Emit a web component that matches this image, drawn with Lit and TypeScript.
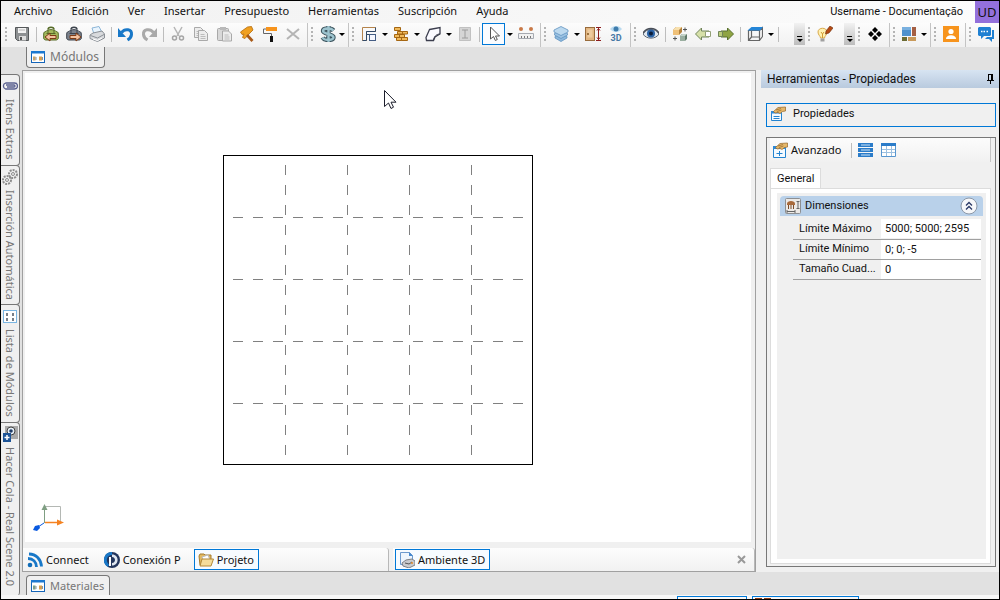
import { LitElement, html, css, svg, TemplateResult } from "lit";
import { customElement } from "lit/decorators.js";

const icon = (body: TemplateResult, size = 16) =>
  html`<svg width=${size} height=${size} viewBox="0 0 16 16" aria-hidden="true">${body}</svg>`;

const modules = (c = "#c9a46a") => svg`
  <rect x="1.500" y="2.500" width="13" height="11" fill="#fff" stroke="#1565b8"/>
  <rect x="1" y="2" width="14" height="2.500" fill="#1c78d0"/>
  <rect x="3" y="7.500" width="2.500" height="4" fill=${c}/><rect x="9" y="7.500" width="3" height="4" fill="#d8a050"/>
  <path d="M6 8v3M12.500 8v3" stroke="#8b96a2"/>`;

const backpack = (fill: string, dark: string, arrow: string) => svg`
  <path d="M5 3.500C5 .500 11 .500 11 3.500" fill="none" stroke=${dark} stroke-width="1.500"/>
  <path d="M.700 8c0-2 1.300-2.500 2.300-2.500 1-2.500 9-2.500 10 0 1 0 2.300.500 2.300 2.500v4c0 1.500-1.500 2-2.300 2H3c-1 0-2.300-.500-2.300-2z" fill=${fill} stroke=${dark}/>
  <path d="M3.500 7.500h9M5 4v4M11 4v4" stroke=${dark}/>${arrow === "left"
    ? svg`<path d="M2 11l5-4v2.500h6v3H7V15z" fill="#f3c3a0" stroke="#7d3a14"/>`
    : svg`<path d="M15 11l-5-4v2.500H4v3h6V15z" fill="#f3c3a0" stroke="#7d3a14"/>`}`;

const sheet = (x: number, y: number) => svg`
  <path d="M${x} ${y}h6l3 3v7h-9z" fill="#ececec" stroke="#a9a9a9"/>
  <path d="M${x + 2} ${y + 4}h4M${x + 2} ${y + 6}h5M${x + 2} ${y + 8}h5" stroke="#bcbcbc"/>`;

const cube = (x: number, y: number, a: string, b: string, c: string) => svg`
  <path d="M${x} ${y + 2}l2-2h5v5l-2 2h-5z" fill=${c}/>
  <path d="M${x} ${y + 2}h5v5h-5z" fill=${a}/><path d="M${x} ${y + 2}l2-2h5l-2 2z" fill=${b}/>`;

const hand = svg`
  <path d="M3.500 5.500L8 1.500 15.500 1v4l-3 .500-2.500 2-2-1-3 .500z" fill="#e6b869" stroke="#94662a" stroke-width=".7"/>
  <path d="M6 4l5-1.500M7 5.500l4.500-1.500" stroke="#94662a" stroke-width=".7"/>`;

const I: Record<string, TemplateResult> = {
  save: svg`<path d="M1.500 1.500h13v13h-11l-2-2z" fill="#8d9092" stroke="#55585a"/><path d="M4 2h8v5H4z" fill="#f3f3f3"/><path d="M5 10h7v4.500H5z" fill="#ddd"/><path d="M6 11h2v3H6z" fill="#555"/><path d="M5 4h6" stroke="#b5b5b5"/>`,
  open: backpack("#a3b95c", "#566b28", "left"),
  pack: backpack("#7b828d", "#3c434d", "right"),
  print: svg`<path d="M5 8L3 2l7-1.500 3 6z" fill="#e9f4fd" stroke="#8cb6d8"/><path d="M1 9l3-2 9-2 2.500 3v4l-7 3.500L1 12.500z" fill="#d8dadd" stroke="#8b9096"/><path d="M1.500 9.500l7 2.500 6.500-3.500" fill="none" stroke="#8b9096"/><path d="M4 13l4.500 1.500L13 12" fill="none" stroke="#fff"/>`,
  undo: svg`<path d="M3.500 6.500C7 2 14 3 13.500 8.500c-.2 2.500-1.500 4-4 5.500" fill="none" stroke="#1878c8" stroke-width="3"/><path d="M0 2v9h8z" fill="#1878c8"/>`,
  redo: svg`<path d="M12.500 6.500C9 2 2 3 2.500 8.500c.2 2.500 1.500 4 4 5.500" fill="none" stroke="#a9a9a9" stroke-width="3"/><path d="M16 2v9H8z" fill="#a9a9a9"/>`,
  cut: svg`<path d="M4 1l5 9M12 1l-5 9" stroke="#b5b5b5" stroke-width="1.500"/><circle cx="4.500" cy="12" r="2" fill="none" stroke="#a5a5a5" stroke-width="1.500"/><circle cx="11.500" cy="12" r="2" fill="none" stroke="#a5a5a5" stroke-width="1.500"/>`,
  copy: svg`${sheet(1.5, 1.5)}${sheet(5.5, 4.5)}`,
  paste: svg`<rect x="1.500" y="2.500" width="11" height="12" rx="1" fill="#d8d8d8" stroke="#a9a9a9"/><path d="M4 1h6v3H4z" fill="#b9b9b9"/>${sheet(6.5, 5)}`,
  hammer: svg`<path d="M1.500 6l7-5 4-.500 1.500 3.500-3 3-5 5.500-2.500-1 1.500-3.500-2 .500z" fill="#f0a020" stroke="#b46a0a" stroke-width=".8"/><path d="M9 8l5.500 6-2 2L7 10z" fill="#a85a18"/>`,
  roller: svg`<path d="M4 1h11v4H4z" fill="#f7941d"/><path d="M4 3H1.500v4.500h8v3" fill="none" stroke="#666"/><path d="M8 10h3v6H8z" fill="#111"/>`,
  del: svg`<path d="M2 3l12 10M14 3L2 13" stroke="#b4b4b4" stroke-width="2"/>`,
  money: svg`<path d="M13.500 4.500C11 1.500 3 2 3 5s10.500 3 10.500 6.300S4.500 15 2.500 11.500M8.500 0v16" fill="none" stroke="#3c545e" stroke-width="4.400"/><path d="M13.500 4.500C11 1.500 3 2 3 5s10.500 3 10.500 6.300S4.500 15 2.500 11.500M8.500 0v16" fill="none" stroke="#9dc4cf" stroke-width="2.400"/>`,
  walls: svg`<path d="M1.500 14.500v-13h13v4h-9v9z" fill="none" stroke="#b5844c"/><path d="M1.500 14.500h4v-6h3M14.500 1.500v4h-9v3" fill="none" stroke="#334a68"/><rect x="8.500" y="8.500" width="6" height="6" fill="#f6f8ff" stroke="#445d84"/>`,
  bricks: svg`<g fill="#f0b95a" stroke="#a56612"><path d="M1.500 1.500h6v3h-6zM4.500 5.500h5v2.500h-5zM9.500 5.500h5v2.500h-5zM1.500 8.500h5v3h-5zM6.500 8.500h5v3h-5zM3.500 11.500h5v3h-5zM8.500 11.500h6v3h-6z"/></g>`,
  shape: svg`<path d="M4.500 3.500l10.500-2v6.500l-5 3-1.500 3.500H1.500l-.500-3z" fill="#fafaff" stroke="#3b3d4d" stroke-width="1.300"/><path d="M15 8c-4 0-6 3-6.500 6" fill="none" stroke="#3b3d4d"/>`,
  dim: svg`<path d="M2.500 1.500h11v13h-11z" fill="#d5d5d5" stroke="#c1c1c1"/><path d="M5 4h6M5 12h6M8 4v8" stroke="#9c9c9c"/>`,
  arrow: svg`<path d="M4.500 1v12l3-2.500 1.800 4 2-1-1.800-3.500h4z" fill="#fff" stroke="#555"/>`,
  ruler: svg`<circle cx="3" cy="3" r="2" fill="#c97a48"/><circle cx="13" cy="3" r="2" fill="#c97a48"/><path d="M.500 7.500h15v5H.500z" fill="#f1f1f1" stroke="#a6aab1"/><path d="M3.500 10v2M6.500 10v2M9.500 10v2M12.500 10v2" stroke="#777"/>`,
  layers: svg`<g stroke="#5f93c0" stroke-width=".8"><path d="M2 10.500l6-3 6 3v1.500l-6 3.500L2 12z" fill="#8db8dd"/><path d="M1.500 7.500l6.500-3 6.500 3V9L8 12.500 1.500 9z" fill="#9dc3e3"/><path d="M1 4l7-3.500L15 4v2L8 9.500 1 6z" fill="#bcd9ef"/></g>`,
  door: svg`<rect x=".500" y="1.500" width="9" height="13" fill="#e2b682" stroke="#986b3c"/><rect x="2.500" y="3.500" width="5" height="8" fill="#eecb9e"/><circle cx="3" cy="8" r="1" fill="#845722"/><path d="M11 1.500h5M11 14.500h5M13.500 2v12M12 4.500l1.500-2 1.500 2M12 11.500l1.500 2 1.500-2" fill="none" stroke="#8e1e1e"/>`,
  eye: svg`<path d="M0 8c3-6 13-6 16 0-3 5.500-13 5.500-16 0z" fill="#dfe6ee" stroke="#5b6673"/><circle cx="8" cy="7.500" r="4" fill="#2a62a5"/><circle cx="8" cy="7.500" r="2" fill="#0b1c38"/><path d="M0 7C4 1 12 1 16 7" fill="none" stroke="#4a4f58" stroke-width="1.500"/>`,
  cubes: svg`<path d="M1 4l3-3h6v5l-3 3H1z" fill="#b3803a"/><path d="M1 4h6v5H1z" fill="#efc078"/><path d="M1 4l3-3h6L7 4z" fill="#f8e0ae"/>${cube(8, 8, "#9aafa0", "#c4d3c9", "#5f7868")}<path d="M11 3.500h4M13 1.500v4M3 10.500v4M1 12.500h4" stroke="#555"/>`,
  back: svg`<path d="M.500 8l6-6v3H14v6H6.500v3z" fill="#d6e0a8" stroke="#71855a"/><path d="M10.500 5.500h5v5h-5z" fill="#fff" stroke="#93a077"/>`,
  fwd: svg`<path d="M15.500 8l-6-6v3H3v6h6.500v3z" fill="#8fa443" stroke="#58702c"/><path d="M.500 5.500h4v5h-4z" fill="#bccd7c" stroke="#71855a"/>`,
  box3d: svg`<path d="M1.500 14.500v-10h11v10zM12.500 4.500l3-3v9l-3 4M4.500 4v7h8M1.500 14.500l3-3.500" fill="none" stroke="#666" stroke-width="1.200"/><path d="M.500 4.500L4.500 1H16l-3 3.500z" fill="#2586d8"/>`,
  bulb: svg`<path d="M3.500 12c0-2-2.500-3-2.500-6C1 1 10 1 10 6c0 3-2.500 4-2.500 6z" fill="#fff1b2" stroke="#d9a94a"/><path d="M4 6l1.500 2L7 6M5.500 8v4" fill="none" stroke="#d29b31"/><path d="M3.500 12.500h4v3h-4z" fill="#a0a0a0"/><path d="M9 5l4-5 3 2-4 5-3.500 1z" fill="#b54a12" stroke="#6a2a08" stroke-width=".6"/>`,
  diamonds: svg`<path d="M8 1l3 3-3 3-3-3zM8 9l3 3-3 3-3-3zM4 5l3 3-3 3-3-3zM12 5l3 3-3 3-3-3z" fill="#000"/>`,
  mosaic: svg`<path d="M0 1h9v9H0z" fill="#4f91cd"/><path d="M0 1h9v3H0z" fill="#79b0df"/><path d="M10 1h4v9h-4z" fill="#a45f43"/><path d="M0 11h5v4H0z" fill="#6b6b34"/><path d="M6 11h8v4H6z" fill="#c99a5a"/>`,
  person: svg`<rect width="16" height="16" fill="#f7941d"/><circle cx="8" cy="5.500" r="2.600" fill="#fff"/><path d="M3 13c0-5 10-5 10 0z" fill="#fff"/>`,
  chat: svg`<path d="M1 1h11l1 1v7l-1 1H6l-3 3v-3H1L0 9V2z" fill="#1f80d2"/><path d="M14 4h2v9h-2v3l-3-3H7l2-2h5z" fill="#1f80d2"/><path d="M3 5.500h1.500M5.500 5.500H7M8.500 5.500H10" stroke="#fff" stroke-width="1.500"/>`,
  clip: svg`<path d="M3.500 5h9a3 3 0 010 6h-9a3.200 3.200 0 010-6M4 7h8a1 1 0 010 2H5" fill="none" stroke="#5b6190" stroke-width="1.300"/>`,
  gears: svg`<g fill="none" stroke="#8d8d8d"><circle cx="11" cy="5" r="4" stroke-dasharray="2 1" stroke-width="2"/><circle cx="11" cy="5" r="1.500"/><circle cx="5" cy="11" r="4" stroke-dasharray="2 1" stroke-width="2"/><circle cx="5" cy="11" r="1.500"/></g>`,
  list: svg`<rect x="1.500" y="2.500" width="13" height="12" fill="#fff" stroke="#79b5e2"/><path d="M4 5h2v3H4zM10 5h2v3h-2zM4 10h2v3H4zM10 10h2v3h-2z" fill="#777e88"/>`,
  queue: svg`<path d="M3 0h13v13H3z" fill="#aaa"/><circle cx="9" cy="5" r="4" fill="#e8f0f7" stroke="#444"/><circle cx="9" cy="5" r="1.800" fill="#1d3a66"/><path d="M1 7h8v9H1z" fill="#1e5496"/><path d="M2.500 11.500h5M5 9v5" stroke="#fff" stroke-width="1.500"/>`,
  rss: svg`<circle cx="3" cy="13" r="2.300" fill="#0f6cb8"/><path d="M1 6.500c5 0 8.500 3.500 8.500 8.500M2 2c7 0 12 5 12.500 12.500" fill="none" stroke="#1878c8" stroke-width="2.800"/>`,
  promob: svg`<circle cx="8" cy="8" r="8" fill="#23355c"/><path d="M8 0a8 8 0 00-4 15l1-2.500C1 9 3 3 8 3z" fill="#1878c8"/><path d="M8 2.500c7.500 0 7.500 11 0 11v-2.500c4 0 4-6 0-6z" fill="#dfe6f0"/><path d="M6 14V5" stroke="#fff" stroke-width="2"/>`,
  folder: svg`<path d="M1 4l1-2h4l1 1h6v10H2z" fill="#e1b963" stroke="#a87d2c"/><path d="M4 5l6-2 2 5H5z" fill="#fff" stroke="#bbb"/><path d="M4 7h11.500l-2.500 7H2z" fill="#f5dc9a" stroke="#b48a3a"/>`,
  ambient: svg`<path d="M1.500.500h9l3 3v9h-12z" fill="#eef5fd" stroke="#6d9ace"/><path d="M10 0l4 4h-4z" fill="#4688ce"/><path d="M3 11l4-3 6-1 3 2v4l-6 3-6-2z" fill="#c9cacd" stroke="#7c8086"/><path d="M6 11l4 1 3-2" fill="none" stroke="#555"/><circle cx="13" cy="11" r="1" fill="#e28a2a"/>`,
  card: svg`<path d="M1.500 6.500h10v8h-10z" fill="#f4faff" stroke="#2484d0"/><path d="M1 5h11v2.500H1z" fill="#2e8ad8"/><path d="M3.500 10.500h6M3.500 12.500h6" stroke="#2484d0"/>${hand}`,
  advanced: svg`<path d="M1.500 4.500h12v11h-12z" fill="#f4faff" stroke="#2484d0"/><path d="M1 4h13v3H1z" fill="#2e8ad8"/><path d="M4.500 11.500h6M7.500 9v5" stroke="#2484d0"/>${hand}`,
  rows: svg`<path d="M0 1h15v4H0zM0 6h15v4H0zM0 11h15v4H0z" fill="#2b7cc9"/><path d="M3 3h9M3 8h9M3 13h9" stroke="#cfe5f8"/>`,
  table: svg`<path d="M.500 1.500h14v13H.500z" fill="#fff" stroke="#5896cf"/><path d="M0 1h15v3H0z" fill="#2b7cc9"/><path d="M5.500 4v10M10.500 4v10M1 7.500h13M1 10.500h13" stroke="#9cc0e0"/>`,
  size: svg`<rect x=".500" y=".500" width="15" height="15" rx="1" fill="#ece9e6" stroke="#8d8f92"/><path d="M2 5.500C2 2 10 2 10 5.500V7H2z" fill="#a8693a"/><path d="M3.500 7v4M8.500 7v4M6 7v4" stroke="#7c4c28"/><path d="M11.500 3.500h3M11.500 10.500h3M13 4v6M2 13.500h8M2 12v3M10 12v3" stroke="#666"/>`,
};

@customElement("app-root")
export class AppRoot extends LitElement {
  static styles = css`
    :host { display: block; font: 11px/16px "Noto Sans", "Open Sans", sans-serif; color: #111; }
    * { box-sizing: border-box; }
    button, input { font: inherit; color: inherit; border: 0; padding: 0; margin: 0; background: none; }
    svg { display: block; flex: none; }
    .window { height: 100vh; border: 1px solid #000; background: #e1e1e1; display: flex; flex-direction: column; overflow: hidden; }
    .top { display: flex; height: 22px; flex: none; background: linear-gradient(90deg, #f1f1f1, #fcfcfc); }
    .menu { display: flex; gap: 19px; padding: 0 0 3px 13px; flex: 1; align-items: center; }
    .menu button, .label { white-space: nowrap; }
    .ui { font-family: Roboto, sans-serif; }
    .user { align-self: center; padding-right: 12px; white-space: nowrap; }
    .avatar { width: 24px; background: #9370db; text-align: center; font-size: 13px; line-height: 20px; }
    .tools { display: flex; flex: none; height: 24px; background: #f4f4f4; }
    .strip { display: flex; align-items: center; padding: 0 3px 2px 0; border-right: 1px solid #c4c4c4; background: linear-gradient(#fcfcfc, #f1f1f1); }
    .strip:first-child { padding-left: 1px; }
    .strip.over { padding-right: 0; border-right: 0; }
    .strip:last-child { flex: 1; border: 0; }
    .grip { width: 8px; height: 15px; flex: none; background: linear-gradient(#b4b4b4, #b4b4b4) 3px 0 / 2px 2px no-repeat, linear-gradient(#b4b4b4, #b4b4b4) 3px 4px / 2px 2px no-repeat, linear-gradient(#b4b4b4, #b4b4b4) 3px 8px / 2px 2px no-repeat, linear-gradient(#b4b4b4, #b4b4b4) 3px 12px / 2px 2px no-repeat; }
    .tool { width: 23px; height: 22px; display: flex; align-items: center; justify-content: center; flex: none; }
    .tool.on { border: 1px solid #0078d7; background: #fafcff; }
    .sep { width: 6px; height: 15px; flex: none; background: linear-gradient(#bdbdbd, #bdbdbd) 3px 0 / 1px 100% no-repeat; }
    .drop { width: 9px; height: 22px; display: flex; align-items: center; justify-content: center; flex: none; }
    .tight { width: 6px; }
    .drop::after { content: ""; border: 3px solid transparent; border-top-color: #000; border-bottom: 0; }
    .more { width: 11px; height: 22px; margin-left: 8px; background: linear-gradient(#f2f2f2, #bcbcbc); display: flex; flex-direction: column; align-items: center; justify-content: flex-end; gap: 2px; padding-bottom: 3px; flex: none; }
    .more.far { margin-left: 13px; }
    .more::before { content: ""; width: 5px; height: 1px; background: #000; }
    .more::after { content: ""; border: 3px solid transparent; border-top-color: #000; border-bottom: 0; }
    .work { flex: 1; min-height: 0; display: grid; grid-template-columns: 21px minmax(0, 1fr) 243px; grid-template-rows: 23px minmax(0, 1fr) 23px; }
    .band { grid-column: 2 / 4; display: flex; padding-left: 4px; }
    .tab { display: flex; align-items: center; gap: 4px; padding: 0 5px 0 3px; border: 1px solid #777; background: #f0f0f0; color: #767676; white-space: nowrap; }
    .band .tab { height: 21px; border-top: 0; border-radius: 0 0 4px 4px; font-size: 12px; }
    .foot .tab { margin-top: 3px; height: 20px; border-top: 1px solid #777; border-bottom: 0; border-radius: 4px 4px 0 0; font-size: 11px; }
    .side { grid-column: 1; grid-row: 2 / 4; padding-top: 4px; display: flex; flex-direction: column; width: 19px; }
    .side .tab { writing-mode: vertical-rl; border-left: 0; border-radius: 0 4px 4px 0; padding: 3px 0 5px; width: 19px; margin-bottom: -1px; gap: 5px; line-height: 16px; }
    .side .tab:last-child { border-bottom: 0; flex: 1; justify-content: flex-start; }
    .view { grid-column: 2; grid-row: 2; border: 1px solid #a0a0a0; background: #f0f0f0; padding-top: 2px; display: flex; flex-direction: column; min-width: 0; }
    .scene { flex: 1; min-height: 0; margin: 0 4px 6px 2px; background: #fff; overflow: hidden; }
    .scene svg { width: 100%; height: 100%; }
    .docs { display: flex; height: 23px; flex: none; gap: 4px; }
    .docbar { flex: 1; display: flex; align-items: center; background: linear-gradient(#fdfdfd, #f1f1f1); border-right: 1px solid #b8b8b8; border-radius: 0 3px 0 0; }
    .docbar.start { flex: 0 0 50%; }
    .doc { height: 21px; display: flex; align-items: center; gap: 3px; padding: 0 4px 0 3px; border: 1px solid transparent; white-space: nowrap; margin-right: 6px; }
    .doc.on { border-color: #0078d7; background: #f7fbff; margin-left: 2px; }
    .close { margin-left: auto; margin-right: 8px; }
    .right { grid-column: 3; grid-row: 2; background: #f0f0f0; padding-left: 5px; display: flex; flex-direction: column; min-height: 0; }
    .title { height: 18px; flex: none; display: flex; align-items: center; justify-content: space-between; padding: 0 4px 0 6px; background: linear-gradient(#d7e4f2, #b9cade); font-size: 12px; }
    .prop { height: 24px; flex: none; margin: 15px 3px 0 5px; padding: 0 4px 2px 3px; display: flex; align-items: center; gap: 7px; border: 1px solid #0078d7; }
    .box { flex: 1; min-height: 0; margin: 10px 3px 5px 5px; border: 1px solid #777; padding: 0 4px 2px 3px; display: flex; flex-direction: column; }
    .boxbar { display: flex; height: 24px; flex: none; align-items: center; padding-left: 2px; background: linear-gradient(#fcfcfc, #f1f1f1); border-right: 1px solid #c4c4c4; }
    .boxbar .adv { display: flex; align-items: center; gap: 3px; margin-right: 7px; font-family: "Noto Sans", sans-serif; }
    .general { align-self: flex-start; margin: 6px 0 -1px; height: 21px; padding: 0 6px; background: #fff; border: 1px solid #dcdcdc; border-bottom: 0; }
    .page { flex: 1; border: 1px solid #dcdcdc; background: #fff; padding: 4px 4px 4px 6px; display: flex; }
    .inner { flex: 1; background: #f0f0f0; padding: 3px; }
    .head { width: 100%; height: 20px; display: flex; align-items: center; gap: 4px; padding: 0 5px; background: #b9d1ea; border-radius: 4px 4px 0 0; }
    .head .round { margin-left: auto; }
    .grid { margin: 3px 2px 0 13px; border-collapse: collapse; table-layout: fixed; width: calc(100% - 15px); }
    .grid th, .grid td { height: 20px; padding: 0; border-bottom: 1px solid #a0a0a0; font-weight: 400; text-align: left; }
    .grid th { width: 88px; padding-left: 6px; }
    .grid label { display: block; white-space: nowrap; }
    .grid input { display: block; width: 100%; height: 19px; background: #fff; padding-left: 4px; }
    .status { height: 4px; flex: none; background: #f7f7f7; display: flex; gap: 5px; justify-content: flex-end; padding: 1px 140px 0 0; overflow: hidden; }
    .peek { width: 70px; height: 20px; flex: none; border: 1px solid #0078d7; }
    .peek.wide { width: 107px; display: flex; gap: 2px; padding: 1px 2px; }
    .chip { width: 7px; height: 8px; background: #8c3a14; }
  `;

  tool(name: string, label: string, on = false) {
    return html`<button class="tool ${on ? "on" : ""}" aria-label=${label}>${icon(I[name])}</button>`;
  }
  drop(name: string, label: string, tight = false, on = false) {
    return html`${this.tool(name, label, on)}<button class="drop ${tight ? "tight" : ""}" aria-label="${label}: opciones"></button>`;
  }
  sep() { return html`<span class="sep"></span>`; }
  grip() { return html`<span class="grip"></span>`; }

  scene() {
    const at = [62, 124, 186, 248];
    return html`<svg role="img" aria-label="Ambiente 3D">
      <rect x="198.500" y="82.500" width="309" height="309" fill="#fff" stroke="#000"/>
      <g stroke="#808080" stroke-dasharray="10 10">
        ${at.map(d => svg`<path d="M208 ${d + 82.5}h290M${d + 198.5} 92v290"/>`)}
      </g>
      <path d="M359.500 17.500v16l4-3.500 2.500 5.500 2.500-1.300-2.500-5h5z" fill="#fff" stroke="#1b1d2b"/>
      <path d="M19 433.500h16.500v16" fill="none" stroke="#b4b8b4"/>
      <path d="M19.500 450v-14" stroke="#7f9e82"/><path d="M19.500 431l3 6h-6z" fill="#7f9e82"/>
      <path d="M20 449.500h14" stroke="#f58220" stroke-width="1.500"/><path d="M32 446.500l7 3-7 3z" fill="#f58220"/>
      <path d="M19 450l-6 4" stroke="#0a5ae0"/><path d="M8 457l2-4 4-1 1 3-3 3z" fill="#0a5ae0"/>
    </svg>`;
  }

  row(id: string, label: string, value: string) {
    return html`<tr><th scope="row"><label for=${id}>${label}</label></th><td><input id=${id} .value=${value}></td></tr>`;
  }

  render() {
    const menus = ["Archivo", "Edición", "Ver", "Insertar", "Presupuesto", "Herramientas", "Suscripción", "Ayuda"];
    return html`<div class="window">
      <header class="top">
        <nav class="menu">${menus.map(m => html`<button>${m}</button>`)}</nav>
        <span class="user ui">Username - Documentação</span>
        <button class="avatar">UD</button>
      </header>
      <div class="tools">
        <div class="strip">${this.grip()}${this.tool("save", "Guardar")}${this.sep()}
          ${this.tool("open", "Abrir")}${this.tool("pack", "Exportar")}${this.tool("print", "Imprimir")}${this.sep()}
          ${this.tool("undo", "Deshacer")}${this.tool("redo", "Rehacer")}${this.sep()}
          ${this.tool("cut", "Cortar")}${this.tool("copy", "Copiar")}${this.tool("paste", "Pegar")}${this.tool("hammer", "Construir")}${this.tool("roller", "Pintar")}${this.tool("del", "Eliminar")}</div>
        <div class="strip">${this.grip()}${this.drop("money", "Presupuesto", true)}</div>
        <div class="strip">${this.grip()}${this.drop("walls", "Paredes")}${this.drop("bricks", "Ladrillos")}${this.drop("shape", "Formas")}${this.tool("dim", "Cota")}${this.sep()}
          ${this.drop("arrow", "Seleccionar", false, true)}${this.tool("ruler", "Medir")}</div>
        <div class="strip">${this.grip()}${this.drop("layers", "Capas")}${this.tool("door", "Altura")}
          <button class="tool" aria-label="Vista 3D"><svg width="16" height="18" viewBox="0 0 16 18"><path d="M2 4c3-4 9-4 12 0-3 4-9 4-12 0z" fill="#b9daf0"/><circle cx="8" cy="4" r="2.500" fill="#3f7cac"/><text x="8" y="16" text-anchor="middle" font-family="Roboto" font-size="9" font-weight="700" fill="#4678a5">3D</text></svg></button></div>
        <div class="strip over">${this.grip()}${this.tool("eye", "Ver")}${this.sep()}
          ${this.tool("cubes", "Reemplazar")}${this.tool("back", "Anterior")}${this.tool("fwd", "Siguiente")}${this.sep()}
          ${this.drop("box3d", "Caja")}${this.sep()}<button class="more far" aria-label="Más"></button></div>
        <div class="strip over">${this.grip()}${this.tool("bulb", "Iluminación")}<button class="more" aria-label="Más"></button></div>
        <div class="strip">${this.grip()}${this.tool("diamonds", "Distribuir")}</div>
        <div class="strip">${this.grip()}${this.drop("mosaic", "Ventanas", true)}</div>
        <div class="strip">${this.grip()}${this.tool("person", "Perfil")}</div>
        <div class="strip">${this.grip()}${this.tool("chat", "Mensajes")}</div>
      </div>
      <main class="work">
        <div class="band"><button class="tab">${icon(modules())}Módulos</button></div>
        <div class="side">
          <button class="tab">${icon(I.clip)}Itens Extras</button>
          <button class="tab">${icon(I.gears)}Inserción Automática</button>
          <button class="tab">${icon(I.list)}Lista de Módulos</button>
          <button class="tab">${icon(I.queue)}Hacer Cola - Real Scene 2.0</button>
        </div>
        <section class="view">
          <div class="scene">${this.scene()}</div>
          <div class="docs">
            <div class="docbar start">
              <button class="doc">${icon(I.rss)}Connect</button>
              <button class="doc">${icon(I.promob)}Conexión P</button>
              <button class="doc on">${icon(I.folder)}Projeto</button>
            </div>
            <div class="docbar">
              <button class="doc on">${icon(I.ambient)}Ambiente 3D</button>
              <button class="close" aria-label="Cerrar"><svg width="9" height="9" viewBox="0 0 9 9"><path d="M1 1l7 7M8 1L1 8" stroke="#999" stroke-width="2"/></svg></button>
            </div>
          </div>
        </section>
        <aside class="right ui">
          <div class="title"><span class="label">Herramientas - Propiedades</span>
            <button aria-label="Fijar"><svg width="9" height="12" viewBox="0 0 9 12"><path d="M2.500 1v6M2 1.500h4M5.500 1v6M6.500 1v6M1 7.500h7M4.500 8v3" fill="none" stroke="#000"/></svg></button></div>
          <button class="prop">${icon(I.card)}Propiedades</button>
          <div class="box">
            <div class="boxbar"><button class="adv">${icon(I.advanced)}Avanzado</button>${this.sep()}${this.tool("rows", "Categorías")}${this.tool("table", "Tabla")}</div>
            <button class="general">General</button>
            <div class="page"><div class="inner">
              <button class="head">${icon(I.size)}Dimensiones
                <svg class="round" width="18" height="18" viewBox="0 0 18 18"><circle cx="9" cy="9" r="8" fill="#f7f8fa" stroke="#8c98a8"/><path d="M6 8.500l3-3 3 3M6 12.500l3-3 3 3" fill="none" stroke="#2b3a66" stroke-width="1.300"/></svg></button>
              <table class="grid"><tbody>
                ${this.row("max", "Límite Máximo", "5000; 5000; 2595")}
                ${this.row("min", "Límite Mínimo", "0; 0; -5")}
                ${this.row("cell", "Tamaño Cuad...", "0")}
              </tbody></table>
            </div></div>
          </div>
        </aside>
        <div class="band foot"><button class="tab">${icon(modules("#7ca08a"))}Materiales</button></div>
      </main>
      <footer class="status"><span class="peek"></span><span class="peek wide"><i class="chip"></i><i class="chip"></i></span></footer>
    </div>`;
  }
}
